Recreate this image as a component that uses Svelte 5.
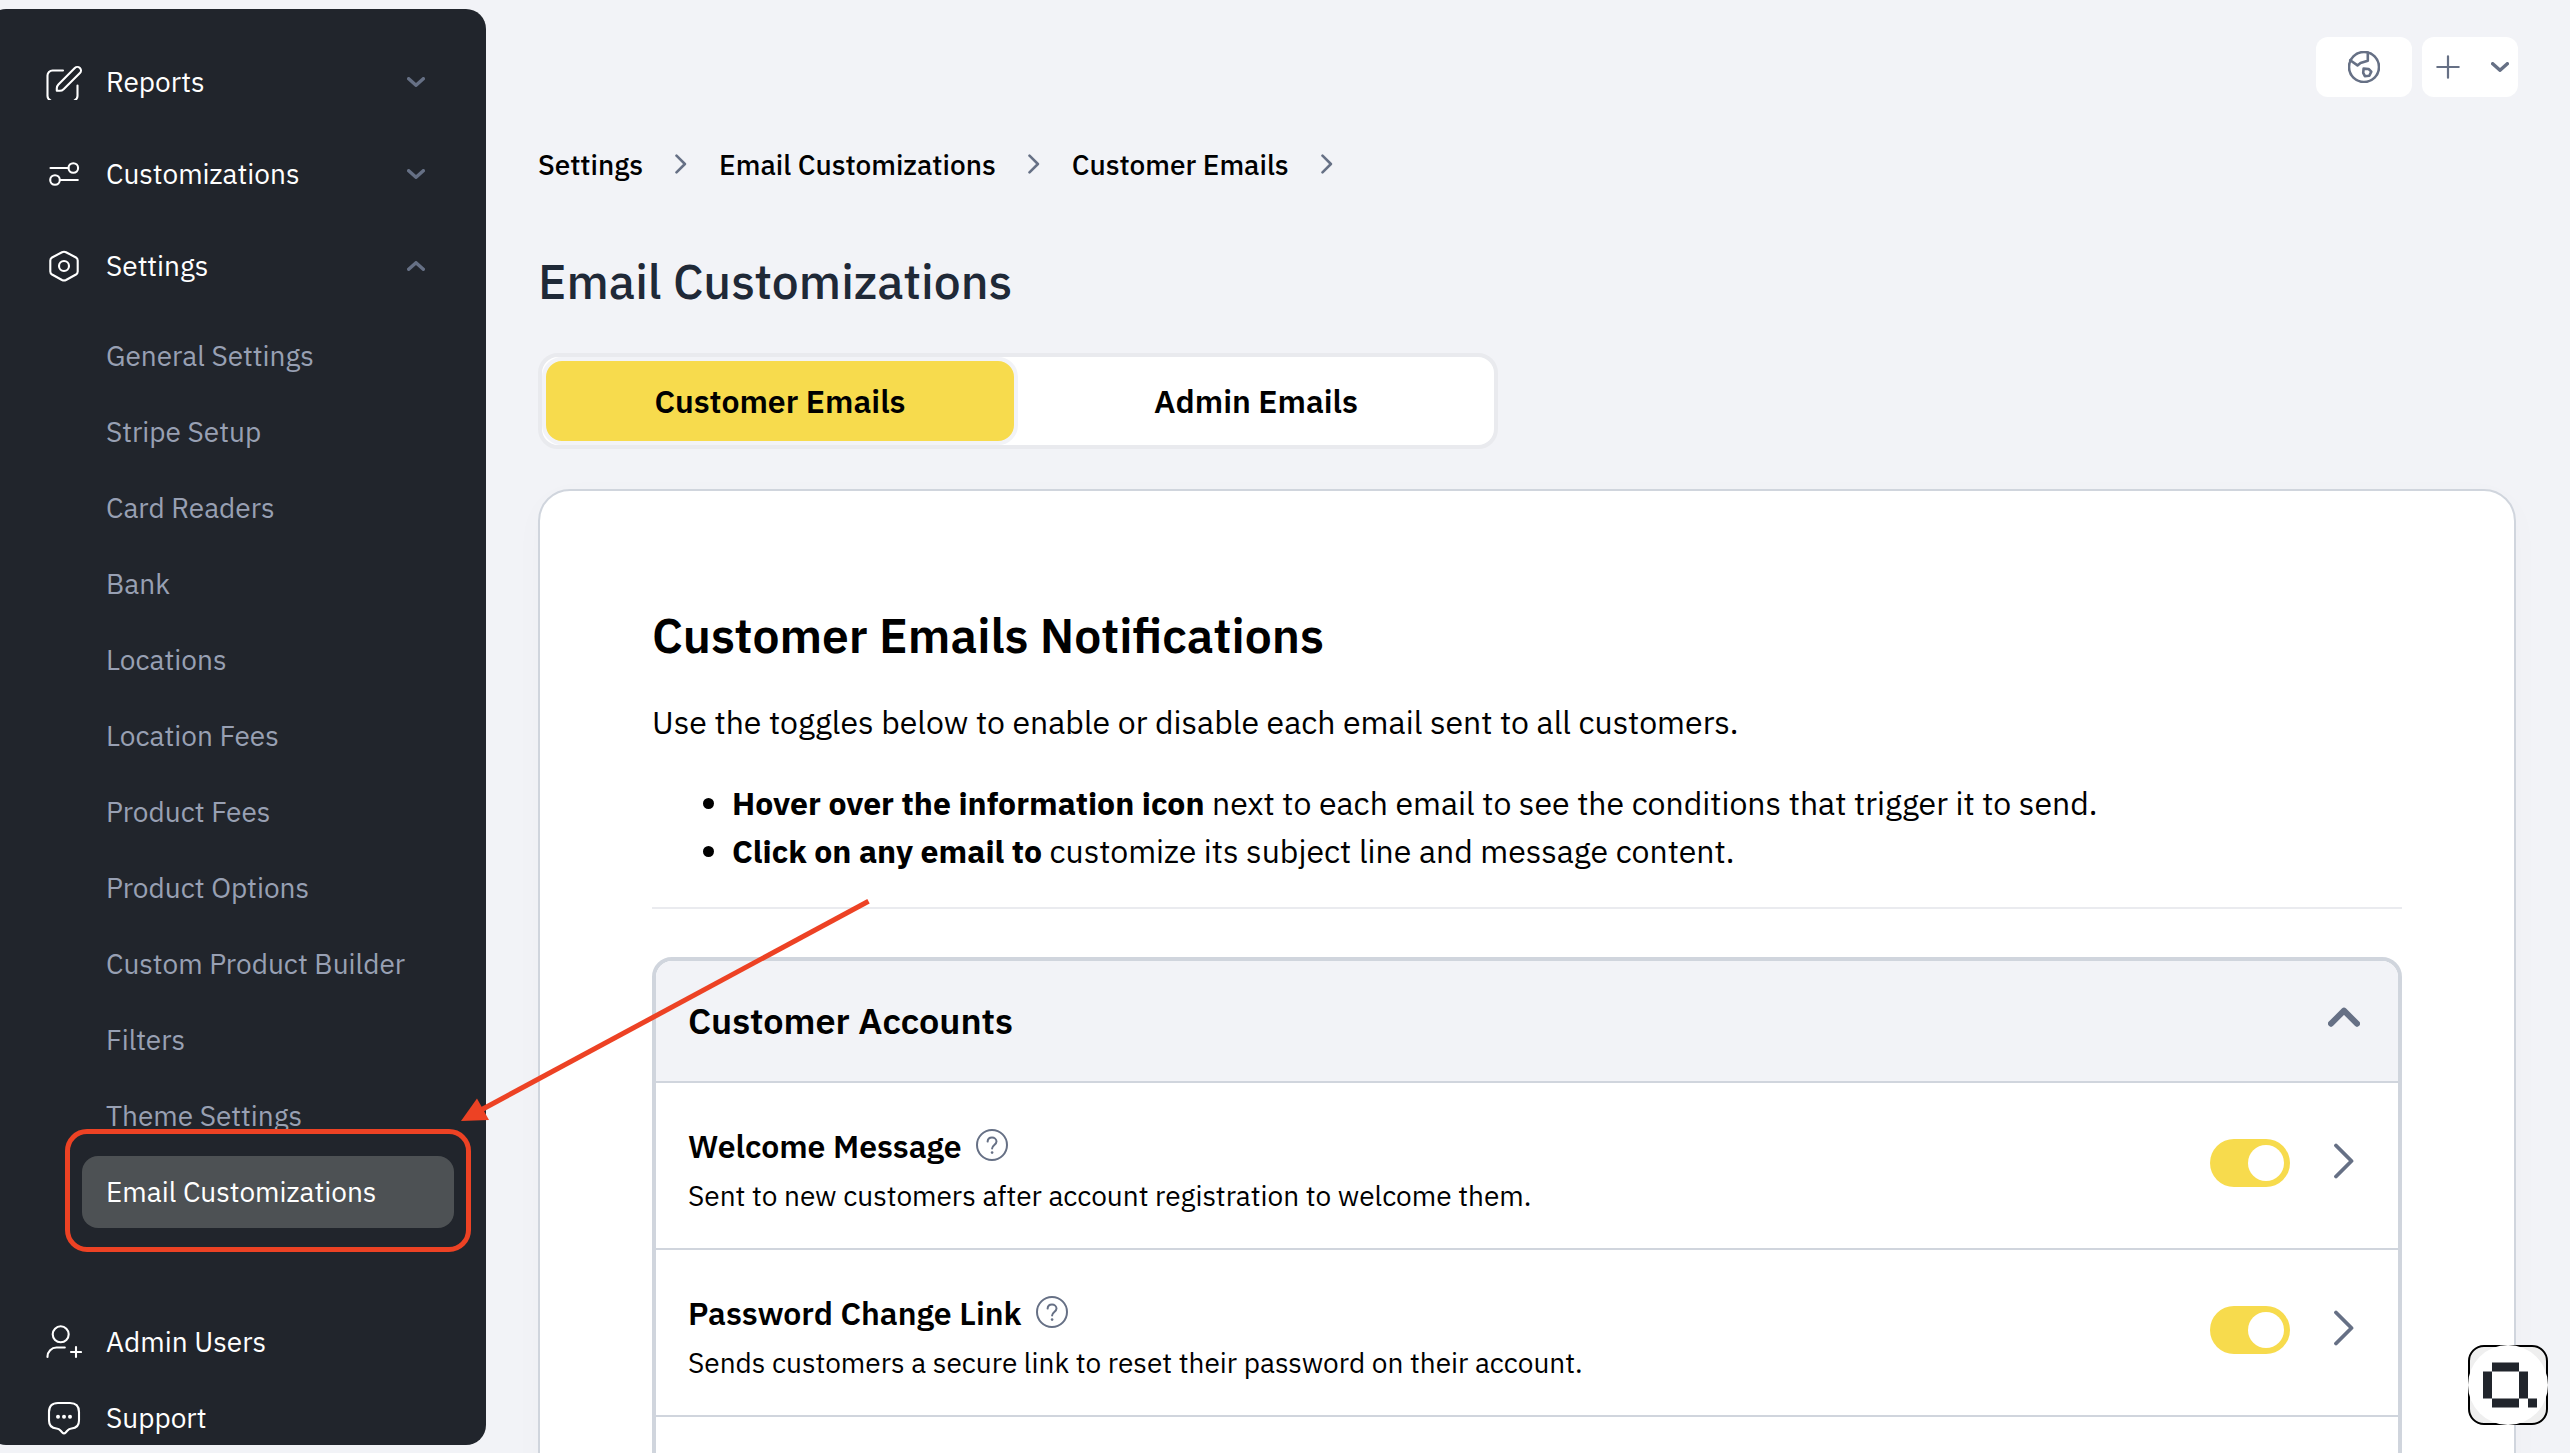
<script>
    let menu = [
        { id: 'reports', label: 'Reports', open: false },
        { id: 'customizations', label: 'Customizations', open: false },
        { id: 'settings', label: 'Settings', open: true }
    ];

    let subItems = [
        'General Settings', 'Stripe Setup', 'Card Readers', 'Bank', 'Locations', 'Location Fees',
        'Product Fees', 'Product Options', 'Custom Product Builder', 'Filters', 'Theme Settings',
        'Email Customizations'
    ];
    let activeItem = 'Email Customizations';

    let footerMenu = [
        { id: 'users', label: 'Admin Users' },
        { id: 'support', label: 'Support' }
    ];

    let crumbs = ['Settings', 'Email Customizations', 'Customer Emails'];

    let tabs = ['Customer Emails', 'Admin Emails'];
    let activeTab = 'Customer Emails';

    let panelOpen = true;
    let emails = [
        { title: 'Welcome Message', text: 'Sent to new customers after account registration to welcome them.', enabled: true },
        { title: 'Password Change Link', text: 'Sends customers a secure link to reset their password on their account.', enabled: true }
    ];

    let toggleMenu = (index) => {
        menu[index].open = !menu[index].open;
    };

    let toggleEmail = (index) => {
        emails[index].enabled = !emails[index].enabled;
    };
</script>

<div class="page">
    <nav class="sidebar">
        {#each menu as item, i}
            <button class="menu-item" on:click={() => toggleMenu(i)}>
                <svg class="menu-icon" viewBox="0 0 36 36">
                    {#if item.id === 'reports'}
                        <path d="M17 6.5H6.5a5 5 0 0 0-5 5V32q0 3 3 4.5M31.5 21.5V32q0 3-3 4.5" />
                        <path d="M10.8 26.8v-2.6q0-2.2 1.6-3.8L28.8 4a3.6 3.6 0 0 1 5.1 5.1L17.6 25.2q-1.6 1.6-3.8 1.6z" />
                    {:else if item.id === 'customizations'}
                        <path d="M4.5 12H22.4M14 24h17.8" />
                        <circle cx="27.3" cy="12" r="4.8" />
                        <circle cx="9" cy="24" r="4.8" />
                    {:else}
                        <path d="M16 4.2q2-1 4 0l10 5.3q1.7 1 1.7 3v11q0 2-1.7 3l-10 5.5q-2 1-4 0l-10-5.5q-1.7-1-1.7-3v-11q0-2 1.7-3z" />
                        <circle cx="18" cy="18" r="5" />
                    {/if}
                </svg>
                <span class="menu-label">{item.label}</span>
                <svg class="menu-chevron" class:open={item.open} viewBox="0 0 18 10">
                    <path d="M1.7 1.7L9 8.3l7.3-6.6" />
                </svg>
            </button>
        {/each}

        {#if menu[2].open}
            <ul class="submenu">
                {#each subItems as item}
                    <li class:active={item === activeItem}>{item}</li>
                {/each}
            </ul>
        {/if}

        <div class="footer-menu">
            {#each footerMenu as item}
                <div class="menu-item small">
                    <svg class="menu-icon" viewBox="0 0 36 36">
                        {#if item.id === 'users'}
                            <circle cx="14.7" cy="10.3" r="8" />
                            <path d="M1.5 33v-.5a9 9 0 0 1 9-9h8.3M30 23v10M25 28h10" />
                        {:else}
                            <path d="M12 3h12q9 0 9 9v8.5q0 7.5-7.5 8-2.5.2-4 2l-1.8 2q-1.7 1.8-3.4 0l-1.8-2q-1.5-1.8-4-2-7.5-.5-7.5-8V12q0-9 9-9z" />
                            <g class="dots">
                                <circle cx="12" cy="16.7" r="2" />
                                <circle cx="18" cy="16.7" r="2" />
                                <circle cx="24" cy="16.7" r="2" />
                            </g>
                        {/if}
                    </svg>
                    <span class="menu-label">{item.label}</span>
                </div>
            {/each}
        </div>
    </nav>

    <main>
        <div class="topbar">
            <button class="top-button" aria-label="View store">
                <svg class="globe" viewBox="0 0 32 32">
                    <circle cx="16" cy="16" r="15" />
                    <path d="M2.2 9.2l7.3 5.2 3-2.4 7.3-2.2V1.6" />
                    <path d="M15.6 17.6l5 .4 2.7 2.6-2 4.2-4.4.4-1.7-3.4z" />
                </svg>
            </button>
            <button class="top-button add" aria-label="Add">
                <svg class="plus" viewBox="0 0 24 24"><path d="M12 1.3v21.4M1.3 12h21.4" /></svg>
                <svg class="caret" viewBox="0 0 18 10"><path d="M1.7 1.7L9 8.3l7.3-6.6" /></svg>
            </button>
        </div>

        <div class="breadcrumbs">
            {#each crumbs as crumb}
                <span>{crumb}</span>
                <svg viewBox="0 0 12 20"><path d="M1.5 1.7L9.9 10l-8.4 8.3" /></svg>
            {/each}
        </div>

        <h1>Email Customizations</h1>

        <div class="tabs">
            {#each tabs as tab}
                <button class="tab" class:active={tab === activeTab} on:click={() => activeTab = tab}>{tab}</button>
            {/each}
        </div>

        <section class="card">
            <h2>Customer Emails Notifications</h2>
            <p class="intro">Use the toggles below to enable or disable each email sent to all customers.</p>
            <ul class="hints">
                <li><strong>Hover over the information icon</strong> next to each email to see the conditions that trigger it to send.</li>
                <li><strong>Click on any email to</strong> customize its subject line and message content.</li>
            </ul>
            <hr>

            <div class="panel">
                <button class="panel-header" on:click={() => panelOpen = !panelOpen}>
                    <span>Customer Accounts</span>
                    <svg class:closed={!panelOpen} viewBox="0 0 32 20"><path d="M3 16.7L16 3.6l13 13.1" /></svg>
                </button>
                {#if panelOpen}
                    {#each emails as email, i}
                        <div class="email">
                            <div class="email-text">
                                <div class="email-title">
                                    {email.title}
                                    <svg viewBox="0 0 32 32">
                                        <circle cx="16" cy="16" r="15" />
                                        <path d="M11.6 12.6c.2-2.6 2-4 4.4-4s4.5 1.6 4.5 4c0 3.2-4.4 3.6-4.4 6.8" />
                                        <circle class="dot" cx="16.1" cy="23.6" r="1.3" />
                                    </svg>
                                </div>
                                <div class="email-description">{email.text}</div>
                            </div>
                            <button class="toggle" class:on={email.enabled} aria-label={email.title} on:click={() => toggleEmail(i)}>
                                <span class="knob"></span>
                            </button>
                            <svg class="email-chevron" viewBox="0 0 20 36"><path d="M2 2.5L17.5 18 2 33.5" /></svg>
                        </div>
                    {/each}
                {/if}
            </div>
        </section>
    </main>

    <!-- callout around the active menu item -->
    <div class="callout"></div>
    <svg class="arrow" viewBox="0 0 410 222">
        <path d="M407.5 1.2L20 210" />
        <polygon points="0,221 16,198.5 28,220" />
    </svg>

    <button class="widget" aria-label="Open assistant">
        <svg viewBox="0 0 80 80">
            <circle cx="40" cy="40" r="40" />
            <path d="M24 17.5h27v9H24zM15 26.5h9v27h-9zM51 26.5h9v27h-9zM24 53.5h27v9H24zM60 53.5h9v9h-9z" />
        </svg>
    </button>
</div>

<style>
    :global(body) {margin: 0; background: #f2f3f7;}

    .page {
        position: relative;
        display: flex;
        height: 1453px;
        overflow: hidden;
        background: #f2f3f7;
        color: #000;
        font-family: "IBM Plex Sans", Roboto, "Liberation Sans", sans-serif;
        font-size: 28px;
    }
    button {font: inherit; color: inherit; border: none; background: none; padding: 0; margin: 0; cursor: pointer;}
    svg {display: block; flex: none; fill: none; stroke-linecap: round; stroke-linejoin: round;}
    ul {margin: 0; padding: 0;}

    /* sidebar */
    .sidebar {
        box-sizing: border-box;
        flex: none;
        width: 500px;
        height: 1436px;
        margin: 9px 0 0 -14px;
        padding: 27px 0 0 14px;
        border-radius: 20px;
        background: #21252c;
        color: #fff;
    }
    .menu-item {display: flex; align-items: center; width: 100%; height: 92px; padding: 0 61px 0 46px; box-sizing: border-box; text-align: left;}
    .menu-item.small {height: 72px;}
    .menu-icon {width: 36px; height: 36px; stroke: #fff; stroke-width: 2.1; margin-right: 24px;}
    .menu-label {flex: 1; line-height: 36px; margin-bottom: 1px;}
    .menu-chevron {width: 18px; height: 10px; stroke: #667085; stroke-width: 3.4;}
    .menu-chevron.open {transform: rotate(180deg);}
    .dots {fill: #fff; stroke: none;}
    .submenu {display: flex; flex-direction: column; gap: 4px; margin: 8px 32px 0 82px; list-style: none;}
    .submenu li {height: 72px; line-height: 71px; padding-left: 24px; border-radius: 16px; color: #98a0b3; white-space: nowrap;}
    .submenu li.active {background: #4d5154; color: #fff;}
    .footer-menu {display: flex; flex-direction: column; gap: 4px; margin-top: 78px;}

    /* main column */
    main {flex: 1; padding: 37px 52px 0;}
    .topbar {display: flex; justify-content: flex-end; gap: 10px;}
    .top-button {display: flex; align-items: center; justify-content: center; width: 96px; height: 60px; border-radius: 12px; background: #fff; stroke: #667085;}
    .top-button.add {justify-content: space-between; padding: 0 9px 0 14px; box-sizing: border-box;}
    .globe {width: 32px; height: 32px; stroke-width: 2.6;}
    .plus {width: 24px; height: 24px; stroke-width: 2.2;}
    .caret {width: 18px; height: 10px; stroke-width: 3.4;}

    .breadcrumbs {display: flex; align-items: center; gap: 32px; margin-top: 50px; line-height: 36px; font-weight: 500;}
    .breadcrumbs svg {width: 12px; height: 20px; stroke: #667085; stroke-width: 2.6; margin-bottom: 2px;}
    h1 {margin: 66px 0 0; font-size: 48px; line-height: 64px; font-weight: 500; color: #1f2937;}

    .tabs {display: flex; width: 952px; height: 88px; margin-top: 40px; border: 4px solid #e9eaee; border-radius: 20px; background: #fff;}
    .tab {flex: 1; box-sizing: border-box; font-size: 32px; font-weight: 600; border: 4px solid transparent; border-radius: 20px;}
    .tab.active {background: #f7db4d; border-color: #f2f3f7;}

    .card {margin: 40px 2px 0 0; height: 1100px; box-sizing: border-box; padding: 114px 112px 0; border: 2px solid #d0d5dd; border-radius: 32px; background: #fff; box-shadow: 0 8px 36px rgba(16, 24, 40, 0.02);}
    h2 {margin: 0; font-size: 48px; line-height: 60px; font-weight: 600;}
    .intro {margin: 33px 0; font-size: 32px; line-height: 48px;}
    .hints {padding-left: 80px; font-size: 32px; line-height: 48px;}
    .hints strong {font-weight: 700;}
    hr {height: 2px; margin: 32px 0 48px; border: none; background: #eaebef;}

    .panel {height: 600px; border: 4px solid #d0d5dd; border-radius: 20px; overflow: hidden;}
    .panel-header {display: flex; align-items: center; justify-content: space-between; width: 100%; height: 122px; box-sizing: border-box; padding: 0 38px 0 32px; border-bottom: 2px solid #d0d5dd; background: #f2f3f7; font-size: 36px; font-weight: 600;}
    .panel-header span {margin-bottom: 1px;}
    .panel-header svg {width: 32px; height: 20px; margin-bottom: 8px; stroke: #667085; stroke-width: 6;}
    .panel-header svg.closed {transform: rotate(180deg);}
    .email {display: flex; align-items: center; height: 165px; padding: 0 44px 0 32px; border-bottom: 2px solid #d0d5dd;}
    .email-text {flex: 1; padding-top: 8px;}
    .email-title {display: flex; align-items: center; gap: 14px; font-size: 32px; line-height: 48px; font-weight: 600;}
    .email-title svg {width: 32px; height: 32px; stroke: #667085; stroke-width: 2; margin-bottom: 2px;}
    .email-title .dot {fill: #667085; stroke: none;}
    .email-description {margin-top: 5px; line-height: 42px;}
    .toggle {display: flex; align-items: center; width: 80px; height: 48px; padding: 0 6px; margin-bottom: 5px; box-sizing: border-box; border-radius: 24px; background: #d0d5dd;}
    .toggle.on {justify-content: flex-end; background: #f7db4d;}
    .knob {width: 36px; height: 36px; border-radius: 50%; background: #fff;}
    .email-chevron {width: 20px; height: 36px; margin: 0 0 9px 44px; stroke: #667085; stroke-width: 3.8;}

    /* overlays */
    .callout {position: absolute; left: 65px; top: 1129px; width: 396px; height: 113px; border: 5px solid #ed4224; border-radius: 22px;}
    .arrow {position: absolute; left: 461px; top: 900px; width: 410px; height: 222px; overflow: visible; stroke: #ed4224; stroke-width: 5;}
    .arrow path {stroke-linecap: butt;}
    .arrow polygon {fill: #ed4224; stroke: none;}
    .widget {position: absolute; left: 2468px; top: 1345px; width: 80px; height: 80px; box-sizing: border-box; border: 2px solid #000; border-radius: 16px; background: #efefef;}
    .widget svg {width: 80px; height: 80px; margin: -2px;}
    .widget circle {fill: #fff;}
    .widget path {fill: #21252c;}
</style>
